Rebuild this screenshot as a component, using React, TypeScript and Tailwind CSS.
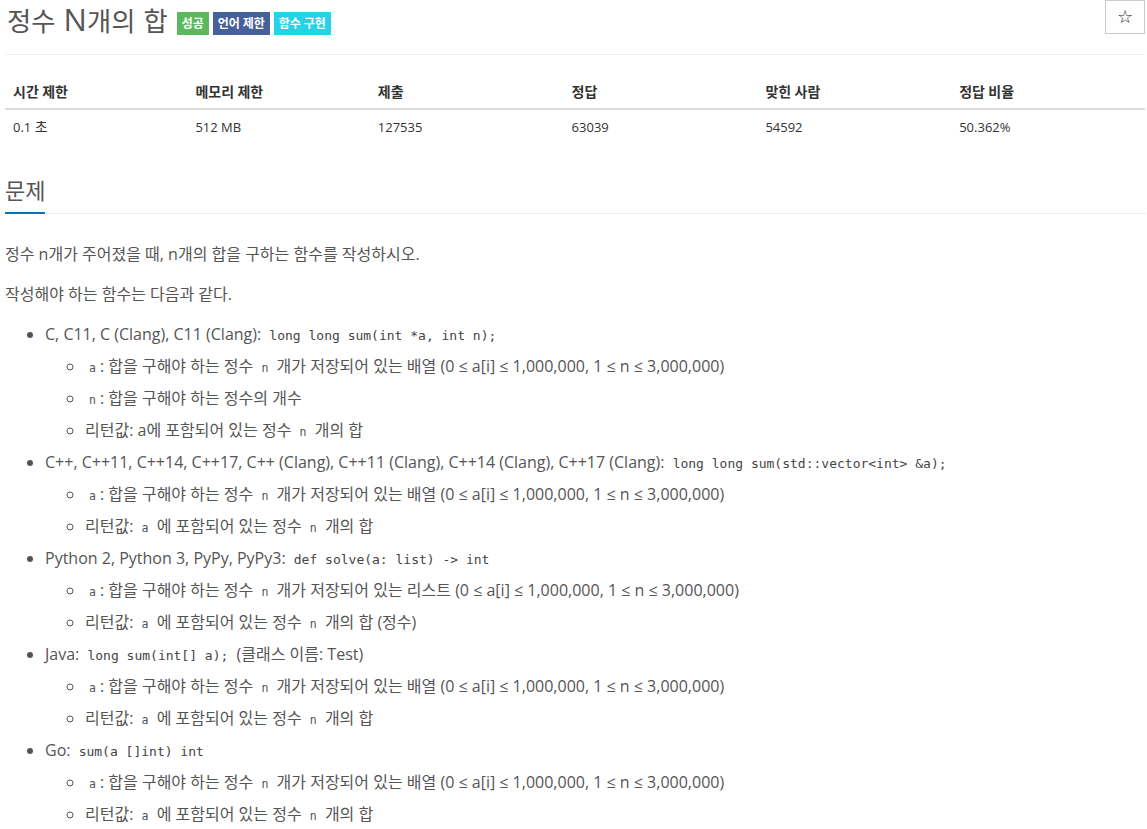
import React from "react";

const HANGUL = /([\uAC00-\uD7A3]+)/;

// Hangul runs get their own size so lines keep their original length
function K({ t, size = "text-[1em]" }: { t: string; size?: string }) {
  return (
    <>
      {t.split(HANGUL).map((part, i) =>
        HANGUL.test(part) ? (
          <span key={i} className={`${size} leading-none`}>
            {part}
          </span>
        ) : (
          <React.Fragment key={i}>{part}</React.Fragment>
        )
      )}
    </>
  );
}

function Code({ children }: { children: string }) {
  return (
    <code className="px-[4px] font-['DejaVu_Sans_Mono',monospace] text-[13px] leading-none text-[#444]">
      {children}
    </code>
  );
}

function Var({ children }: { children: string }) {
  return (
    <code className="px-[4px] font-['DejaVu_Sans_Mono',monospace] text-[11.5px] leading-none text-[#555]">
      {children}
    </code>
  );
}

const stats = [
  { label: "시간 제한", value: "0.1 초", w: "w-[16%]" },
  { label: "메모리 제한", value: "512 MB", w: "w-[16%]" },
  { label: "제출", value: "127535", w: "w-[17%]" },
  { label: "정답", value: "63039", w: "w-[17%]" },
  { label: "맞힌 사람", value: "54592", w: "w-[17%]" },
  { label: "정답 비율", value: "50.362%", w: "w-[17%]" },
];

function ArrayItem({ kind }: { kind: string }) {
  return (
    <li className="leading-8">
      <Var>a</Var>
      <K t=": 합을 구해야 하는 정수 " />
      <Var>n</Var>
      <K t={` 개가 저장되어 있는 ${kind} (0 ≤ a[i] ≤ 1,000,000, 1 ≤ n ≤ 3,000,000)`} />
    </li>
  );
}

function ReturnItem({ tail = "" }: { tail?: string }) {
  return (
    <li className="leading-8">
      <K t="리턴값: " />
      <Var>a</Var>
      <K t=" 에 포함되어 있는 정수 " />
      <Var>n</Var>
      <K t={` 개의 합${tail}`} />
    </li>
  );
}

export default function App() {
  return (
    <div className="min-h-screen bg-white pl-[5px] pr-[2px] font-['Open_Sans','Noto_Sans_CJK_KR',sans-serif] text-[#555]">
      <div className="flex items-start justify-between border-b border-[#eee] pb-[16px]">
        <div className="flex items-start">
          <h1 className="pl-[2px] text-[31px] leading-[38px] text-[#555]">
            <K t="정수 N개의 합" size="text-[0.85em]" />
          </h1>
          <div className="ml-[9px] mt-[12px] flex gap-[4px] text-[11px] font-bold leading-[23px] text-white">
            <span className="bg-[#5cb85c] px-[5px]">
              <K t="성공" size="text-[12px]" />
            </span>
            <span className="bg-[#46609a] px-[5px]">
              <K t="언어 제한" size="text-[12px]" />
            </span>
            <span className="bg-[#26d2e5] px-[5px]">
              <K t="함수 구현" size="text-[12px]" />
            </span>
          </div>
        </div>
        <button className="flex h-[34px] w-[40px] items-center justify-center border border-[#ccc] bg-white font-['DejaVu_Sans',sans-serif] text-[18px] font-bold leading-none text-[#222]">
          ☆
        </button>
      </div>

      <table className="mt-[19px] w-full table-fixed text-left text-[13px] text-[#333]">
        <colgroup>
          {stats.map((s) => (
            <col key={s.label} className={s.w} />
          ))}
        </colgroup>
        <thead>
          <tr className="border-b-2 border-[#ddd]">
            {stats.map((s) => (
              <th key={s.label} className="px-[8px] pb-[6px] pt-[8px] font-bold leading-[20px]">
                <K t={s.label} size="text-[14px]" />
              </th>
            ))}
          </tr>
        </thead>
        <tbody>
          <tr>
            {stats.map((s) => (
              <td key={s.label} className="px-[8px] py-[8px] leading-[18px]">
                <K t={s.value} size="text-[14px]" />
              </td>
            ))}
          </tr>
        </tbody>
      </table>

      <div className="mt-[32px] border-b border-dotted border-[#ddd]">
        <h2 className="-mb-px inline-block border-b-2 border-[#0076c0] pb-[8px] text-[22px] leading-[28px] text-[#555]">
          <K t="문제" />
        </h2>
      </div>

      <div className="mt-[24px] text-[16px]">
        <p className="mb-[8px] leading-8">
          <K t="정수 n개가 주어졌을 때, n개의 합을 구하는 함수를 작성하시오." />
        </p>
        <p className="mb-[8px] leading-8">
          <K t="작성해야 하는 함수는 다음과 같다." />
        </p>
        <ul className="list-disc pl-10">
          <li className="leading-8">
            C, C11, C (Clang), C11 (Clang): <Code>long long sum(int *a, int n);</Code>
            <ul className="list-[circle] pl-10">
              <ArrayItem kind="배열" />
              <li className="leading-8">
                <Var>n</Var>
                <K t=": 합을 구해야 하는 정수의 개수" />
              </li>
              <li className="leading-8">
                <K t="리턴값: a에 포함되어 있는 정수 " />
                <Var>n</Var>
                <K t=" 개의 합" />
              </li>
            </ul>
          </li>
          <li className="leading-8">
            C++, C++11, C++14, C++17, C++ (Clang), C++11 (Clang), C++14 (Clang), C++17 (Clang):{" "}
            <Code>long long sum(std::vector&lt;int&gt; &amp;a);</Code>
            <ul className="list-[circle] pl-10">
              <ArrayItem kind="배열" />
              <ReturnItem />
            </ul>
          </li>
          <li className="leading-8">
            Python 2, Python 3, PyPy, PyPy3: <Code>def solve(a: list) -&gt; int</Code>
            <ul className="list-[circle] pl-10">
              <ArrayItem kind="리스트" />
              <ReturnItem tail=" (정수)" />
            </ul>
          </li>
          <li className="leading-8">
            Java: <Code>long sum(int[] a);</Code> <K t="(클래스 이름: Test)" />
            <ul className="list-[circle] pl-10">
              <ArrayItem kind="배열" />
              <ReturnItem />
            </ul>
          </li>
          <li className="leading-8">
            Go: <Code>sum(a []int) int</Code>
            <ul className="list-[circle] pl-10">
              <ArrayItem kind="배열" />
              <ReturnItem />
            </ul>
          </li>
        </ul>
      </div>
    </div>
  );
}
